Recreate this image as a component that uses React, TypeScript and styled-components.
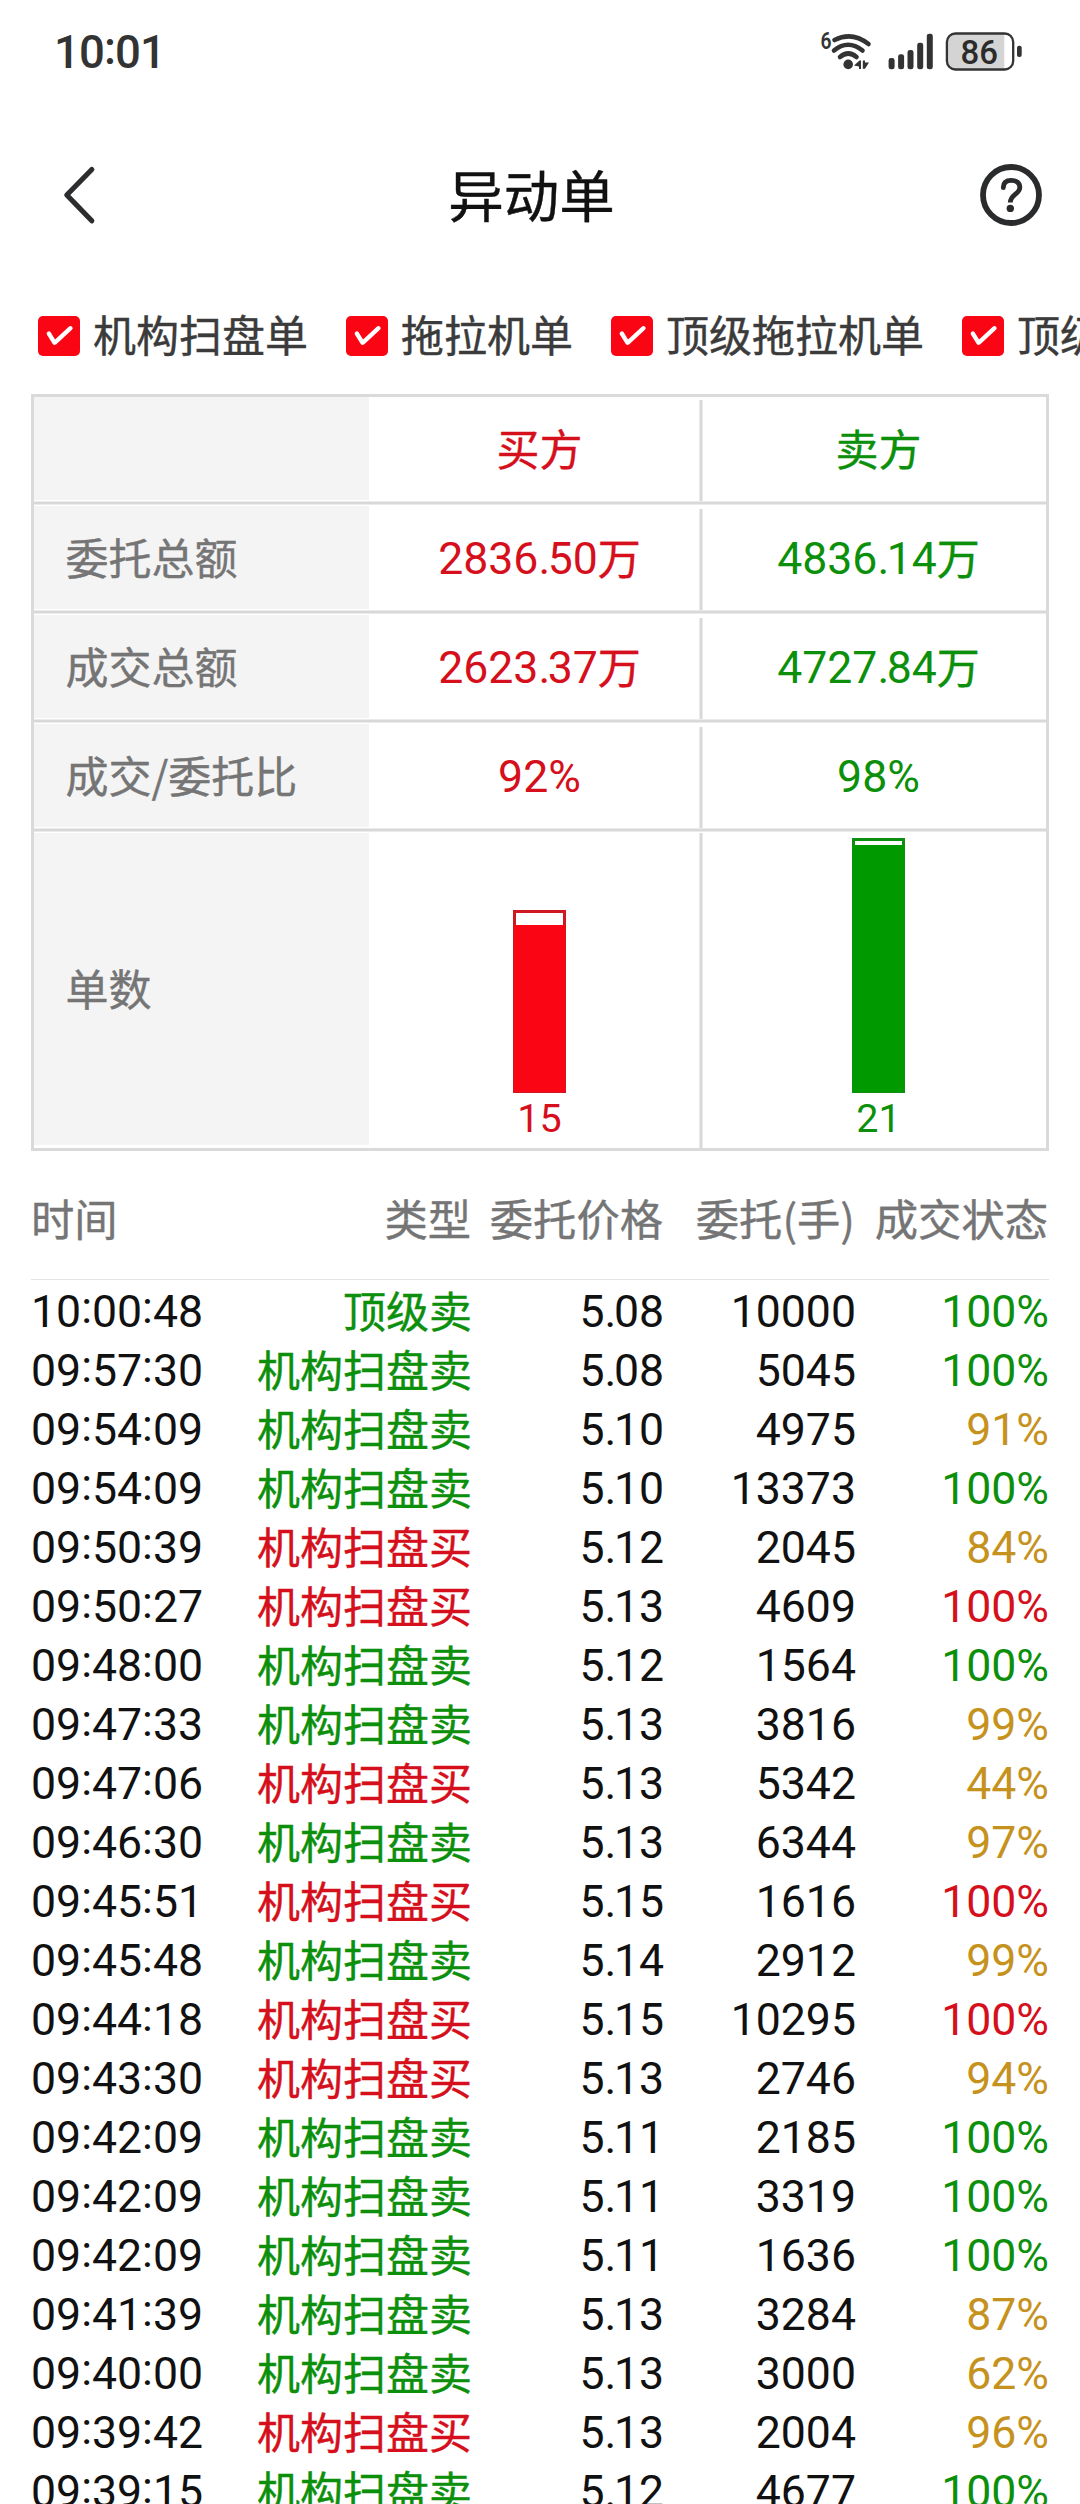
import React from 'react';
import styled, { createGlobalStyle } from 'styled-components';

type Side = 'buy' | 'sell';

const ink = {
  buy: '#d5101c',
  sell: '#0c900c',
  partial: '#c6921e',
  text: '#111111',
  muted: '#757576',
  line: '#dadada',
  icon: '#333333',
};

const GlobalStyle = createGlobalStyle`
  * { box-sizing: border-box; }
  html, body { margin: 0; padding: 0; background: #fff; }
  body { width: 1080px; height: 2504px; overflow: hidden; }
`;

const Screen = styled.div`
  width: 1080px;
  height: 2504px;
  overflow: hidden;
  background: #fff;
  color: ${ink.text};
  font-family: 'Noto Sans CJK SC', 'Noto Sans', sans-serif;
  font-size: 43px;
  line-height: 59px;
  white-space: nowrap;
  -webkit-text-stroke-width: 0.4px;
`;

const StatusBar = styled.header`
  display: flex;
  align-items: center;
  justify-content: space-between;
  height: 104px;
  padding: 0 56px 0 54px;
`;

const Clock = styled.time`
  padding-top: 2px;
  font: 500 45.5px/60px Roboto, sans-serif;
  letter-spacing: -0.9px;
  color: ${ink.icon};
  -webkit-text-stroke-width: 0;
`;

const Shift = styled.span<{ $rise: number; $trim?: number }>`
  vertical-align: ${(p) => p.$rise}px;
  line-height: 0;
  margin-right: ${(p) => -(p.$trim ?? 0)}px;
`;

const TitleBar = styled.div`
  display: grid;
  grid-template-columns: 120px 1fr 120px;
  align-items: center;
  height: 182px;
  padding: 0 24px 0 14px;
`;

const Title = styled.h1`
  margin: 0;
  padding: 0 7px 4px 0;
  font-size: 55.5px;
  font-weight: 400;
  line-height: 80px;
  text-align: center;
`;

const IconButton = styled.button<{ $end?: boolean }>`
  display: flex;
  justify-content: ${(p) => (p.$end ? 'flex-end' : 'flex-start')};
  padding: 0;
  border: 0;
  background: none;
`;

const Filters = styled.div`
  display: flex;
  align-items: center;
  gap: 38px;
  height: 100px;
  margin-bottom: 8px;
  padding: 0 0 0 38px;
  overflow: hidden;
`;

const Filter = styled.label`
  display: flex;
  flex: none;
  align-items: center;
  gap: 13px;
  color: #3b3b3b;
`;

const Box = styled.span`
  display: flex;
  width: 42px;
  height: 40px;
  border-radius: 5px;
  background: #fa0513;
`;

const FilterText = styled.span`
  margin-top: -6px;
`;

const Summary = styled.section`
  margin: 0 31px;
  border: 3px solid ${ink.line};
`;

const SummaryRow = styled.div<{ $height: number }>`
  display: grid;
  grid-template-columns: 335px 330px 4px 1fr;
  height: ${(p) => p.$height}px;
`;

const RowLine = styled.div`
  height: 4px;
  background: linear-gradient(#ebebeb 1px, #d8d8d8 1px 3px, #ebebeb 3px);
`;

const LabelCell = styled.div<{ $top: number; $bottom: number }>`
  display: flex;
  align-items: center;
  margin: ${(p) => p.$top}px 0 ${(p) => p.$bottom}px;
  padding: 0 0 3px 31.5px;
  background: #f4f4f4;
  color: ${ink.muted};
`;

const ValueCell = styled.div<{ $side: Side }>`
  display: flex;
  align-items: center;
  justify-content: center;
  padding-left: ${(p) => (p.$side === 'buy' ? 11 : 8)}px;
  padding-bottom: 3px;
  color: ${(p) => ink[p.$side]};
`;

const ChartCell = styled(ValueCell)`
  flex-direction: column;
  justify-content: flex-end;
  padding-bottom: 4px;
`;

const Divider = styled.div<{ $gap: number }>`
  margin-top: ${(p) => p.$gap}px;
  background: linear-gradient(90deg, #ebebeb 1px, #d8d8d8 1px 3px, #ebebeb 3px);
`;

const Bar = styled.div<{ $side: Side }>`
  display: flex;
  flex-direction: column;
  justify-content: flex-end;
  width: 53px;
  border: solid ${(p) => (p.$side === 'buy' ? '#cf1822' : '#0f8f12')};
  border-width: 3px 3px 1px;
`;

const BarFill = styled.div<{ $side: Side }>`
  margin: 0 -2px;
  background: ${(p) => (p.$side === 'buy' ? '#fa0513' : '#009900')};
`;

const BarCount = styled.div`
  padding-top: 1px;
  font: 400 39.5px/50px Roboto, sans-serif;
  -webkit-text-stroke-width: 0;
`;

const Figure = styled.span<{ $drop?: number }>`
  padding-top: ${(p) => p.$drop ?? 0}px;
  font-family: Roboto, sans-serif;
  font-size: 44.6px;
  -webkit-text-stroke-width: 0;
`;

const columns = '440px 193px 192px 193px';

const ListHead = styled.div`
  display: grid;
  grid-template-columns: ${columns};
  align-items: center;
  height: 129px;
  margin: 0 31px;
  border-bottom: 1px solid #e3e3e3;
  color: ${ink.muted};
`;

const HeadCell = styled.span`
  display: flex;
  justify-content: flex-end;
  padding: 4px 1px 0 0;
  font-size: 43.3px;
`;

const HeadPair = styled(HeadCell)`
  justify-content: space-between;
  padding-right: 0;
`;

const List = styled.div`
  margin: 1px 31px 0;
`;

const Row = styled.div`
  display: grid;
  grid-template-columns: 170px 271px 192px 192px 193px;
  align-items: center;
  height: 59px;
`;

const Cell = styled.span<{ $color?: string }>`
  height: 59px;
  margin-top: -4px;
  text-align: right;
  color: ${(p) => p.$color ?? ink.text};
`;

const TimeCell = styled(Cell)`
  text-align: left;
`;

const TypeCell = styled(Cell)`
  margin-top: -3px;
`;

const Num = ({ value, drop }: { value: string; drop?: number }) => (
  <Figure $drop={drop}>
    {value.split(/([:.])/).map((part, i) =>
      part === ':' ? (
        <Shift key={i} $rise={4}>:</Shift>
      ) : part === '.' ? (
        <Shift key={i} $rise={0} $trim={2.5}>.</Shift>
      ) : (
        part
      ),
    )}
  </Figure>
);

const StatusArt = styled.svg`
  overflow: visible;
`;

const StatusIcons = () => (
  <StatusArt width="204" height="44" viewBox="820 30 204 44" fill={ink.icon} strokeWidth="0">
    <text x="820.5" y="49" fontFamily="Roboto, sans-serif" fontSize="23" fontWeight="600" textLength="11" lengthAdjust="spacingAndGlyphs">6</text>
    <g fill="none" stroke={ink.icon} strokeWidth="4.6">
      <path d="M834.5 40 Q852 31 868.5 44" strokeLinecap="round" />
      <path d="M834 50.5 Q848 39 862.5 50.5" strokeLinecap="round" />
      <path d="M840 57 Q848.3 50 856.5 57" strokeLinecap="round" />
    </g>
    <circle cx="848.2" cy="64.4" r="4.8" />
    <path d="M854 65.5 L859.5 60.5 L861 60.5 V69 H859 V66.5 Z M862.8 60.5 H865 V62.5 H869 L865 68.8 H862.8 Z" />
    <rect x="888.6" y="58" width="6" height="11.3" rx="2.4" />
    <rect x="898.1" y="54.3" width="6" height="15" rx="2.4" />
    <rect x="907.5" y="50" width="6" height="19.3" rx="2.4" />
    <rect x="917.2" y="42.7" width="6" height="26.6" rx="2.4" />
    <rect x="926.8" y="33.7" width="6" height="35.6" rx="2.4" />
    <path d="M955 34 H1004.3 V69 H955 Q947 69 947 61 V42 Q947 34 955 34 Z" fill="#d4d4d4" />
    <rect x="946.9" y="33.5" width="66.3" height="36" rx="8.5" fill="none" stroke={ink.icon} strokeWidth="2.3" />
    <rect x="1017" y="45.7" width="4.7" height="11.3" rx="2" />
    <text x="979.3" y="63.8" textAnchor="middle" fontFamily="Roboto, sans-serif" fontSize="33" fontWeight="500" fill="#2b2b2b">86</text>
  </StatusArt>
);

const BackIcon = () => (
  <svg width="86" height="64" viewBox="14 163 86 64" fill="none" stroke="#2c2d2f" strokeWidth="5.2" strokeLinecap="round" strokeLinejoin="round">
    <path d="M91.8 169.5 L66.8 195 L91.8 220.8" />
  </svg>
);

const HelpIcon = () => (
  <svg width="76" height="64" viewBox="980 163 76 64" fill="none" stroke="#2a2b2d">
    <circle cx="1011" cy="195" r="28" strokeWidth="5.8" />
    <path d="M1003.3 187.5 C1003.3 182.5 1006.5 180.3 1011.3 180.3 C1016.5 180.3 1019.8 183 1019.8 187.5 C1019.8 194 1010.3 194.5 1010.3 202.5" strokeWidth="4.8" />
    <circle cx="1003.3" cy="187.7" r="2.4" fill="#2a2b2d" stroke="none" />
    <circle cx="1010.3" cy="208.4" r="3.7" fill="#2a2b2d" stroke="none" />
  </svg>
);

const CheckMark = () => (
  <svg width="42" height="40" viewBox="0 0 42 40" fill="none" stroke="#fff" strokeWidth="4.3" strokeLinecap="round" strokeLinejoin="round">
    <path d="M10.8 17.5 L16.6 26.8 L32.5 12.2" />
  </svg>
);

const filters = ['机构扫盘单', '拖拉机单', '顶级拖拉机单', '顶级单'];

const totals = [
  { label: '委托总额', buy: '2836.50', sell: '4836.14', unit: '万' },
  { label: '成交总额', buy: '2623.37', sell: '4727.84', unit: '万' },
  { label: '成交/委托比', buy: '92%', sell: '98%', unit: '' },
];

const counts: { side: Side; count: number; total: number; filled: number }[] = [
  { side: 'buy', count: 15, total: 183, filled: 167 },
  { side: 'sell', count: 21, total: 255, filled: 247 },
];

const orders: [string, string, Side, string, string, string][] = [
  ['10:00:48', '顶级卖', 'sell', '5.08', '10000', '100%'],
  ['09:57:30', '机构扫盘卖', 'sell', '5.08', '5045', '100%'],
  ['09:54:09', '机构扫盘卖', 'sell', '5.10', '4975', '91%'],
  ['09:54:09', '机构扫盘卖', 'sell', '5.10', '13373', '100%'],
  ['09:50:39', '机构扫盘买', 'buy', '5.12', '2045', '84%'],
  ['09:50:27', '机构扫盘买', 'buy', '5.13', '4609', '100%'],
  ['09:48:00', '机构扫盘卖', 'sell', '5.12', '1564', '100%'],
  ['09:47:33', '机构扫盘卖', 'sell', '5.13', '3816', '99%'],
  ['09:47:06', '机构扫盘买', 'buy', '5.13', '5342', '44%'],
  ['09:46:30', '机构扫盘卖', 'sell', '5.13', '6344', '97%'],
  ['09:45:51', '机构扫盘买', 'buy', '5.15', '1616', '100%'],
  ['09:45:48', '机构扫盘卖', 'sell', '5.14', '2912', '99%'],
  ['09:44:18', '机构扫盘买', 'buy', '5.15', '10295', '100%'],
  ['09:43:30', '机构扫盘买', 'buy', '5.13', '2746', '94%'],
  ['09:42:09', '机构扫盘卖', 'sell', '5.11', '2185', '100%'],
  ['09:42:09', '机构扫盘卖', 'sell', '5.11', '3319', '100%'],
  ['09:42:09', '机构扫盘卖', 'sell', '5.11', '1636', '100%'],
  ['09:41:39', '机构扫盘卖', 'sell', '5.13', '3284', '87%'],
  ['09:40:00', '机构扫盘卖', 'sell', '5.13', '3000', '62%'],
  ['09:39:42', '机构扫盘买', 'buy', '5.13', '2004', '96%'],
  ['09:39:15', '机构扫盘卖', 'sell', '5.12', '4677', '100%'],
];

export default function App() {
  return (
    <Screen>
      <GlobalStyle />
      <StatusBar>
        <Clock>10<Shift $rise={4}>:</Shift>01</Clock>
        <StatusIcons />
      </StatusBar>
      <TitleBar>
        <IconButton aria-label="返回"><BackIcon /></IconButton>
        <Title>异动单</Title>
        <IconButton $end aria-label="帮助"><HelpIcon /></IconButton>
      </TitleBar>
      <Filters>
        {filters.map((name) => (
          <Filter key={name}>
            <Box><CheckMark /></Box>
            <FilterText>{name}</FilterText>
          </Filter>
        ))}
      </Filters>

      <Summary>
        <SummaryRow $height={104}>
          <LabelCell $top={0} $bottom={1} />
          <ValueCell $side="buy">买方</ValueCell>
          <Divider $gap={3} />
          <ValueCell $side="sell">卖方</ValueCell>
        </SummaryRow>
        {totals.map((t) => (
          <React.Fragment key={t.label}>
            <RowLine />
            <SummaryRow $height={105}>
              <LabelCell $top={1} $bottom={1}>{t.label}</LabelCell>
              <ValueCell $side="buy"><Num value={t.buy} drop={6} />{t.unit}</ValueCell>
              <Divider $gap={4} />
              <ValueCell $side="sell"><Num value={t.sell} drop={6} />{t.unit}</ValueCell>
            </SummaryRow>
          </React.Fragment>
        ))}
        <RowLine />
        <SummaryRow $height={316}>
          <LabelCell $top={1} $bottom={3}>单数</LabelCell>
          {counts.map((c) => (
            <React.Fragment key={c.side}>
              <ChartCell $side={c.side}>
                <Bar $side={c.side} style={{ height: c.total }}>
                  <BarFill $side={c.side} style={{ height: c.filled }} />
                </Bar>
                <BarCount>{c.count}</BarCount>
              </ChartCell>
              {c.side === 'buy' && <Divider $gap={1} />}
            </React.Fragment>
          ))}
        </SummaryRow>
      </Summary>

      <ListHead>
        <HeadPair><span>时间</span><span>类型</span></HeadPair>
        <HeadCell>委托价格</HeadCell>
        <HeadCell>委托(手)</HeadCell>
        <HeadCell>成交状态</HeadCell>
      </ListHead>
      <List>
        {orders.map(([time, type, side, price, volume, status], i) => (
          <Row key={i}>
            <TimeCell><Num value={time} /></TimeCell>
            <TypeCell $color={ink[side]}>{type}</TypeCell>
            <Cell><Num value={price} /></Cell>
            <Cell><Num value={volume} /></Cell>
            <Cell $color={status === '100%' ? ink[side] : ink.partial}><Num value={status} /></Cell>
          </Row>
        ))}
      </List>
    </Screen>
  );
}
